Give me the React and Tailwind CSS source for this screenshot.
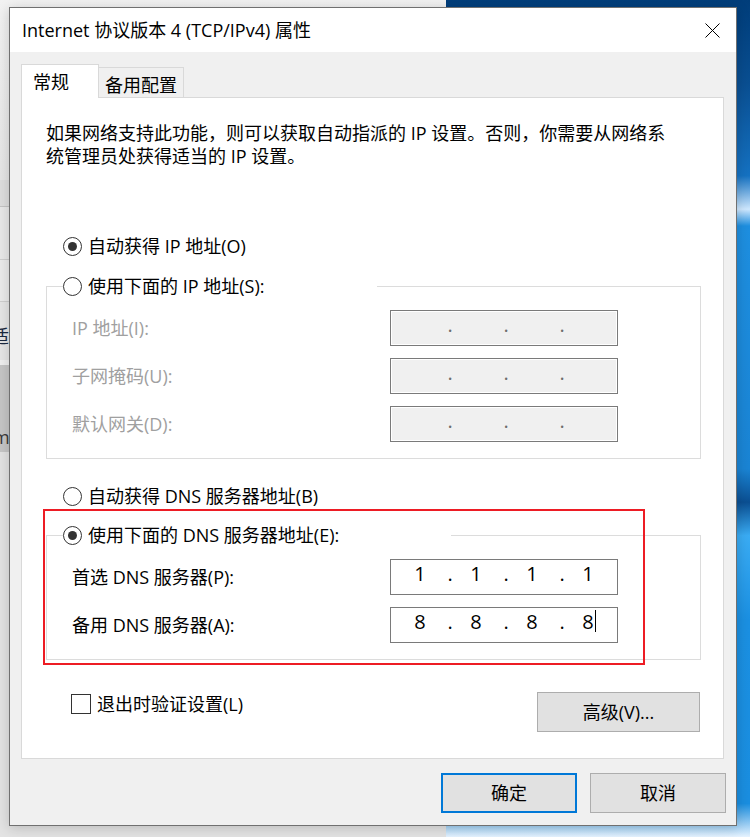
import React from 'react';

function Radio({ checked }) {
  return (
    <span className="w-[19px] h-[19px] rounded-full border border-[#333] bg-white flex items-center justify-center shrink-0">
      {checked && <span className="w-[9px] h-[9px] rounded-full bg-[#333]" />}
    </span>
  );
}

function RadioRow({ checked, label }) {
  return (
    <div className="h-[24px] flex items-center gap-[6px]">
      <Radio checked={checked} />
      <span className="whitespace-nowrap">{label}</span>
    </div>
  );
}

function IpField({ parts, disabled, caret }) {
  return (
    <div
      className={`w-[228px] h-[36px] border border-[#7a7a7a] flex items-center pl-px ${
        disabled ? 'bg-[#f0f0f0] shadow-[inset_0_0_0_1px_#ffffff]' : 'bg-white'
      }`}
    >
      {[0, 1, 2, 3].map((i) => (
        <React.Fragment key={i}>
          <span className="w-[56px] text-center text-[20px] leading-[28px] pb-[6px]">
            <span className="relative">
              {parts ? parts[i] : ''}
              {caret && i === 3 && (
                <span className="absolute left-full top-[2px] ml-px w-px h-[22px] bg-black" />
              )}
            </span>
          </span>
          {i < 3 && (
            <span
              className={`w-0 flex justify-center translate-x-[2px] text-[20px] leading-[28px] pb-[6px] ${
                disabled ? 'text-[#6d6d6d]' : 'text-black'
              }`}
            >
              .
            </span>
          )}
        </React.Fragment>
      ))}
    </div>
  );
}

function FieldRow({ label, disabled, parts, caret }) {
  return (
    <div className="flex items-center h-[36px]">
      <span className={`w-[327px] pl-[9px] whitespace-nowrap ${disabled ? 'text-[#a0a0a0]' : 'text-black'}`}>
        {label}
      </span>
      <IpField parts={parts} disabled={disabled} caret={caret} />
    </div>
  );
}

function Button({ children, primary, className = '' }) {
  return (
    <button
      className={`h-[40px] bg-[#e1e1e1] flex items-center justify-center ${
        primary ? 'border-2 border-[#0078d7]' : 'border border-[#adadad]'
      } ${className}`}
    >
      {children}
    </button>
  );
}

export default function App() {
  return (
    <div className="relative w-[750px] h-[837px] overflow-hidden leading-[24px] text-[18px] text-black font-[family-name:'Open_Sans','Noto_Sans_CJK_SC',sans-serif] bg-[linear-gradient(180deg,#003d7a_0%,#0a4f92_10%,#1572c2_21%,#cfe8ff_25%,#1e8fe0_27%,#1a84d4_56%,#0b4f92_60%,#3aacf4_64%,#1b90e2_74%,#1a8ee0_96%,#e6f3ff_100%)]">
      {/* window behind the dialog */}
      <div className="absolute left-0 top-0 w-[446px] h-[837px] flex flex-col bg-[#ececec]">
        <div className="h-[180px] bg-[linear-gradient(180deg,#f2f2f2,#e6e6e6)]" />
        <div className="h-[27px] bg-[#dedede] border-b border-[#c4c4c4]" />
        <div className="h-[53px] bg-[#e9e9e9] border-b border-[#cfcfcf]" />
        <div className="h-[42px] bg-[#ebebeb] border-b border-[#cfcfcf]" />
        <div className="h-[58px] bg-[#e6e6e6] pt-[22px]">
          <span className="block -ml-[9px] text-[#1c2a40]">适</span>
        </div>
        <div className="h-[5px] bg-[#f0f0f0]" />
        <div className="h-[87px] bg-[#c6c6c6] pt-[60px]">
          <span className="block -ml-[7px] text-[#3a3a3a]">m</span>
        </div>
        <div className="flex-1 bg-[#e3e3e3]" />
      </div>

      {/* dialog */}
      <div className="absolute left-[9px] top-[7px] w-[728px] h-[819px] border border-[#707070] bg-[#f0f0f0] flex flex-col shadow-[0_2px_12px_rgba(0,0,0,0.18)]">
        {/* title bar */}
        <div className="h-[44px] bg-white flex items-center justify-between pl-[12px] pr-[16px] shrink-0">
          <span className="whitespace-nowrap">Internet 协议版本 4 (TCP/IPv4) 属性</span>
          <svg width="15" height="15" viewBox="0 0 15 15" fill="none" stroke="#000" strokeWidth="1">
            <path d="M0.5 0.5 L14.5 14.5 M14.5 0.5 L0.5 14.5" />
          </svg>
        </div>

        <div className="flex-1 pt-[12px] flex flex-col">
          {/* tabs */}
          <div className="flex items-end ml-[11px] h-[33px]">
            <div className="relative z-10 w-[78px] h-[34px] -mb-px bg-white border-l border-t border-r border-[#d9d9d9] pl-[11px] flex items-center">
              常规
            </div>
            <div className="w-[85px] h-[30px] border-t border-r border-[#d9d9d9] pl-[6px] pt-[4px] flex items-center">
              备用配置
            </div>
          </div>

          {/* panel */}
          <div className="relative ml-[11px] w-[703px] h-[662px] bg-white border border-[#d9d9d9]">
            <p className="mt-[24px] ml-[24px] leading-[23px] whitespace-nowrap">
              如果网络支持此功能，则可以获取自动指派的 IP 设置。否则，你需要从网络系
              <br />
              统管理员处获得适当的 IP 设置。
            </p>

            <div className="mt-[66px] ml-[41px]">
              <RadioRow checked label="自动获得 IP 地址(O)" />
            </div>

            <fieldset className="mt-[16px] ml-[24px] w-[655px] border border-[#dcdcdc] px-[16px] pb-[16px]">
              <legend className="w-[314px]">
                <RadioRow label="使用下面的 IP 地址(S):" />
              </legend>
              <div className="mt-[12px] flex flex-col gap-[12px]">
                <FieldRow disabled label="IP 地址(I):" />
                <FieldRow disabled label="子网掩码(U):" />
                <FieldRow disabled label="默认网关(D):" />
              </div>
            </fieldset>

            <div className="mt-[25px] ml-[41px]">
              <RadioRow label="自动获得 DNS 服务器地址(B)" />
            </div>

            <fieldset className="mt-[15px] ml-[24px] w-[655px] border border-[#dcdcdc] px-[16px] pb-[16px]">
              <legend className="w-[388px]">
                <RadioRow checked label="使用下面的 DNS 服务器地址(E):" />
              </legend>
              <div className="mt-[12px] flex flex-col gap-[12px]">
                <FieldRow label="首选 DNS 服务器(P):" parts={['1', '1', '1', '1']} />
                <FieldRow label="备用 DNS 服务器(A):" parts={['8', '8', '8', '8']} caret />
              </div>
            </fieldset>

            <div className="mt-[32px] pl-[49px] pr-[23px] flex items-start justify-between">
              <div className="h-[24px] flex items-center gap-[6px]">
                <span className="w-[20px] h-[20px] border border-[#333] bg-white" />
                <span>退出时验证设置(L)</span>
              </div>
              <Button className="w-[163px]">高级(V)...</Button>
            </div>

            {/* highlight annotation */}
            <div className="absolute left-[21px] top-[411px] w-[602px] h-[156px] border-2 border-[#ed1c24] pointer-events-none" />
          </div>

          {/* dialog buttons */}
          <div className="mt-[14px] pr-[10px] flex justify-end gap-[13px]">
            <Button primary className="w-[136px]">确定</Button>
            <Button className="w-[136px]">取消</Button>
          </div>
        </div>
      </div>
    </div>
  );
}
